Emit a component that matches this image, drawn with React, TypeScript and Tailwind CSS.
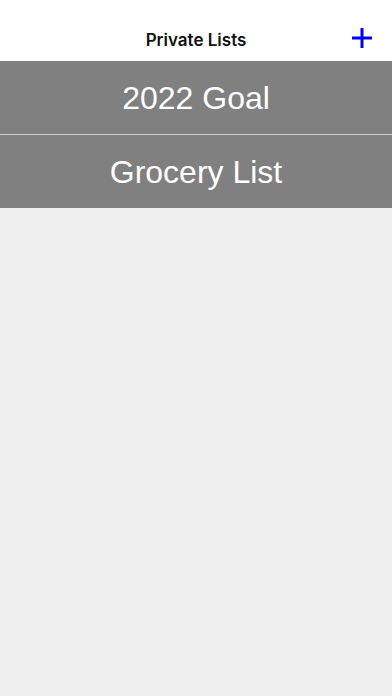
import React from 'react';

const lists = ['2022 Goal', 'Grocery List'];

export default function App() {
  return (
    <div className="min-h-[696px] bg-[#f0f0f0]">
      <header className="relative h-[61px] bg-white flex items-end justify-center pb-[12px]">
        <h1 className="text-[17px] font-semibold text-[#111] leading-none font-['Inter','Noto_Sans',sans-serif]">
          Private Lists
        </h1>
        <button className="absolute right-[19px] top-[27px] w-[22px] h-[22px]" aria-label="Add list">
          <svg viewBox="0 0 22 22" className="w-[22px] h-[22px]">
            <path d="M11 1v20M1 11h20" stroke="#0000ff" strokeWidth="3" fill="none" />
          </svg>
        </button>
      </header>

      <div className="divide-y divide-[#cfcfcf]">
        {lists.map((name) => (
          <div
            key={name}
            className="h-[73px] bg-[#808080] flex items-center justify-center box-content"
          >
            <span className="text-white text-[32px] leading-none font-['Liberation_Sans',Arial,sans-serif]">
              {name}
            </span>
          </div>
        ))}
      </div>
    </div>
  );
}
